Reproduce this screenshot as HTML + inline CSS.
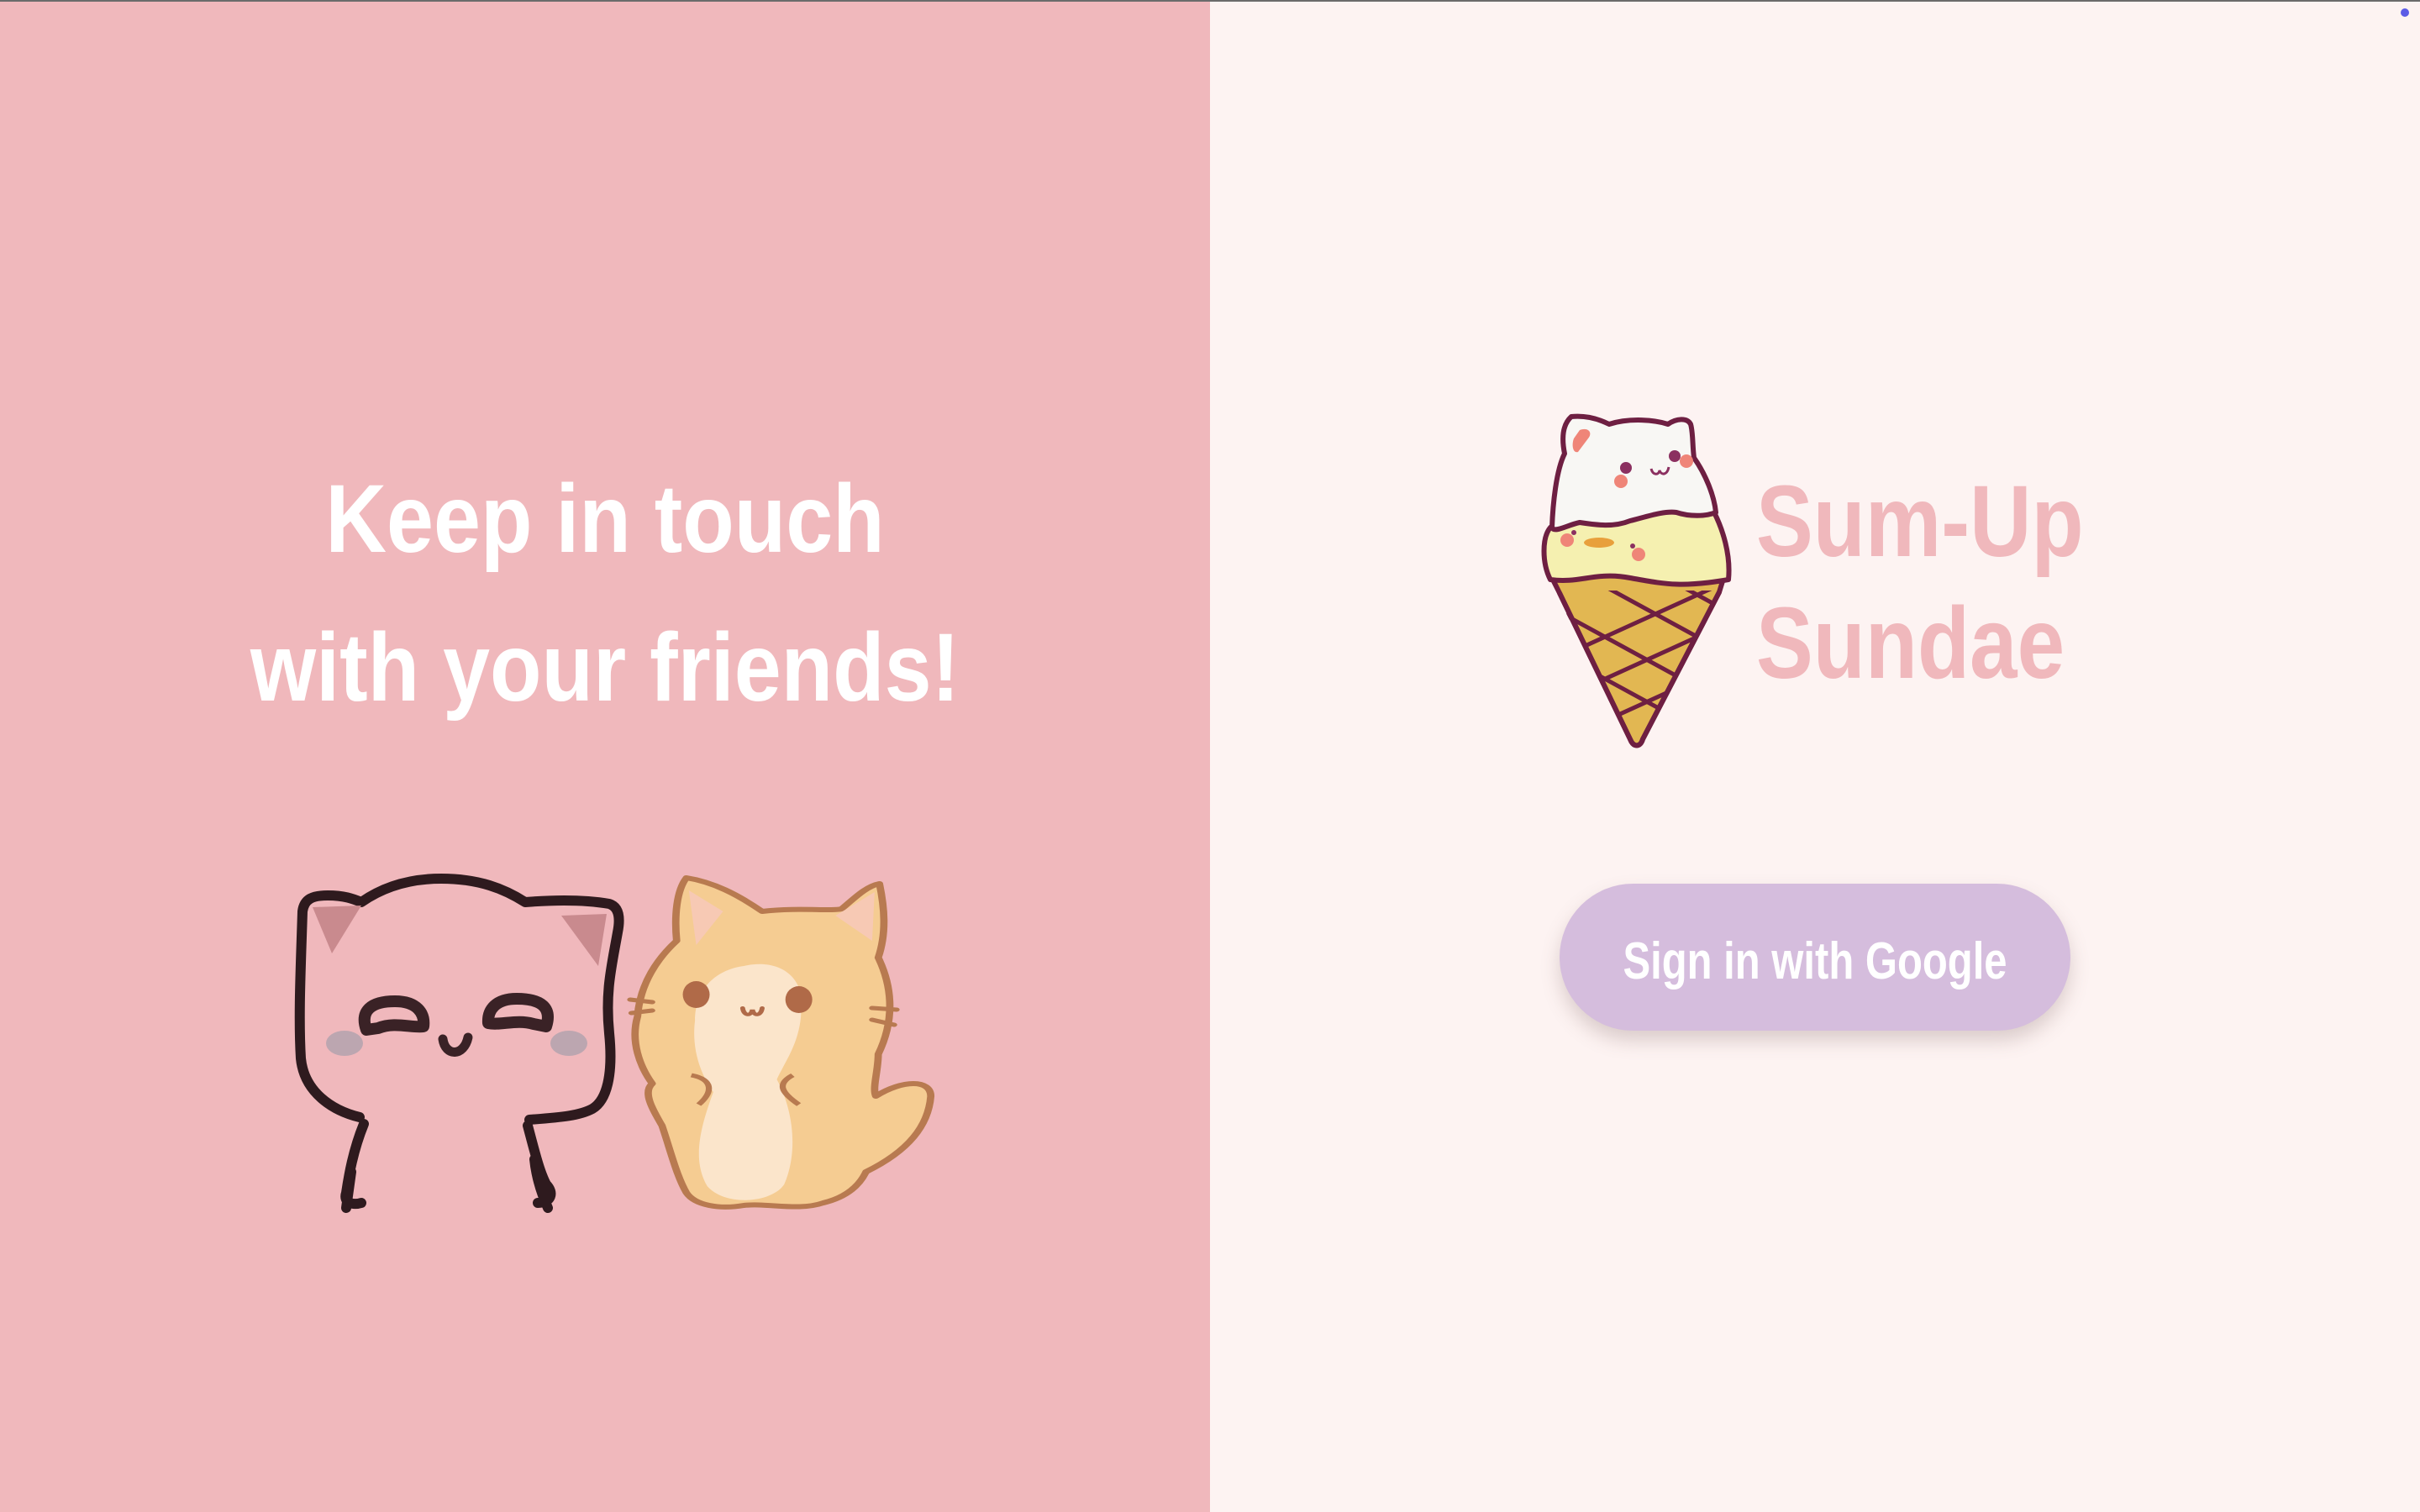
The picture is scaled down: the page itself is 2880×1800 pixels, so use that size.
<!DOCTYPE html>
<html><head><meta charset="utf-8">
<style>
html,body{margin:0;padding:0;width:2880px;height:1800px;overflow:hidden;background:#fdf3f2;}
body{position:relative;font-family:"Liberation Sans",sans-serif;}
.left{position:absolute;left:0;top:0;width:1440px;height:1800px;background:#f0b8bc;}
.topline{position:absolute;left:0;top:0;width:2880px;height:2px;background:#6b6b6b;}
.t{position:absolute;font-weight:bold;white-space:nowrap;line-height:1;}
.title{color:#fff;font-size:115px;left:720px;transform:translateX(-50%) scaleX(0.875);}
.brand{color:#f0b8bc;font-size:121px;left:2090px;transform-origin:0 0;transform:scaleX(0.84);}
.btn{position:absolute;left:1856px;top:1052px;width:608px;height:175px;border-radius:88px;background:#d5bddd;box-shadow:0 12px 22px rgba(120,90,90,0.25);}
.btntext{color:#fff;font-size:62px;left:2160px;top:1114px;transform:translateX(-50%) scaleX(0.79);}
.dot{position:absolute;left:2857px;top:10px;width:10px;height:10px;border-radius:50%;background:#5b5be6;}
</style></head>
<body>
<div class="left"></div>
<div class="topline"></div>
<div class="dot"></div>

<div class="t title" style="top:561px;">Keep in touch</div>
<div class="t title" style="top:738px;">with your friends!</div>

<div class="t brand" style="top:560px;">Sum-Up</div>
<div class="t brand" style="top:705px;">Sundae</div>

<div class="btn"></div>
<div class="t btntext">Sign in with Google</div>

<svg width="2880" height="1800" style="position:absolute;left:0;top:0" xmlns="http://www.w3.org/2000/svg">
  <defs>
    <clipPath id="cone"><path d="M1850,703 L2046,703 L1955,880 C1952,890 1944,890 1940,880 Z"/></clipPath>
  </defs>
  <!-- White cat -->
  <g fill="none" stroke="#2e1a1e" stroke-width="12" stroke-linecap="round" stroke-linejoin="round">
    <path d="M428,1330 C395,1322 362,1300 358,1260 C355,1210 358,1150 360,1085 C362,1070 372,1066 390,1066 C410,1066 420,1070 430,1074 C450,1060 480,1046 525,1046 C570,1046 600,1058 625,1074 C650,1072 690,1070 725,1076 C738,1080 738,1095 735,1110 C728,1150 720,1180 725,1230 C730,1280 722,1310 705,1320 C690,1328 670,1330 630,1333"/>
    <path d="M433,1338 C420,1370 415,1400 412,1420 C408,1432 420,1435 430,1432 M412,1438 L418,1395"/>
    <path d="M628,1340 C636,1370 642,1395 650,1410 C660,1420 656,1432 640,1432 M652,1438 C644,1420 638,1400 636,1380"/>
  </g>
  <path d="M372,1080 L430,1078 L395,1135 Z" fill="#c98a8e"/>
  <path d="M722,1088 L668,1090 L712,1150 Z" fill="#c98a8e"/>
  <g fill="none" stroke="#3a2226" stroke-width="14" stroke-linecap="round" stroke-linejoin="round">
    <path d="M436,1226 C428,1203 442,1192 470,1192 C496,1192 506,1206 504,1222 C490,1224 470,1216 450,1224 Z"/>
    <path d="M650,1222 C657,1200 645,1189 615,1189 C590,1189 580,1202 581,1218 C596,1221 615,1213 635,1219 Z"/>
    <path d="M527,1237 C530,1258 552,1258 557,1235" stroke-width="11"/>
  </g>
  <ellipse cx="410" cy="1242" rx="22" ry="15" fill="#bca6b0"/>
  <ellipse cx="677" cy="1242" rx="22" ry="15" fill="#bca6b0"/>

  <!-- Orange cat (stretched horizontally) -->
  <g transform="translate(340,0) scale(1.454,1) translate(-340,0)">
  <g stroke="#b87a50" stroke-width="6" stroke-linejoin="round" stroke-linecap="round">
    <path fill="#f5cc92" d="M823,1305 C845,1285 868,1285 868,1305 C866,1340 850,1370 815,1395 C810,1410 800,1425 780,1432 C760,1442 735,1432 715,1435 C695,1440 675,1435 668,1420 C660,1400 655,1370 648,1340 C640,1320 632,1300 640,1290 C630,1270 622,1240 628,1210 C630,1170 645,1140 660,1120 C658,1090 660,1060 668,1045 C690,1050 710,1065 730,1085 C760,1080 785,1085 795,1082 C805,1070 815,1055 826,1052 C830,1080 832,1110 825,1140 C835,1170 840,1210 825,1255 C825,1275 820,1295 823,1305 Z"/>
  </g>
  <path d="M790,1090 L822,1062 L820,1120 Z" fill="#f7c9b4"/>
  <path d="M670,1060 L698,1085 L676,1125 Z" fill="#f7c9b4"/>
  <path fill="#fbe5cb" d="M715,1150 C745,1140 765,1165 762,1200 C762,1240 748,1265 742,1285 C755,1320 760,1370 748,1410 C738,1432 700,1437 685,1412 C672,1380 680,1340 690,1300 C680,1280 672,1250 675,1215 C675,1180 690,1155 715,1150 Z"/>
  <path fill="none" stroke="#b87a50" stroke-width="5" d="M672,1280 C690,1285 690,1300 678,1315 M755,1280 C742,1290 745,1300 760,1315"/>
  <ellipse cx="676" cy="1184" rx="11" ry="16" fill="#b06a48"/>
  <ellipse cx="760" cy="1190" rx="11" ry="16" fill="#b06a48"/>
  <path d="M714,1200 C715,1210 721,1210 722,1202 C723,1210 729,1210 730,1200" fill="none" stroke="#b06a48" stroke-width="4" stroke-linecap="round"/>
  <g stroke="#b87a50" stroke-width="5" stroke-linecap="round">
    <path d="M820,1200 L840,1202 M820,1214 L838,1220 M622,1190 L640,1193 M623,1206 L640,1203"/>
  </g>
  </g>

  <!-- Ice cream -->
  <g stroke="#6e1f42" stroke-width="6" stroke-linejoin="round" stroke-linecap="round">
    <path fill="#e2b752" d="M1848,690 C1900,680 1990,680 2050,692 L2046,705 L1955,880 C1952,890 1944,890 1940,880 L1856,706 Z"/>
  </g>
  <g clip-path="url(#cone)" stroke="#6e1f42" stroke-width="5" fill="none">
    <path d="M1840,720 L2060,840 M1840,770 L2060,890 M1840,660 L2060,780 M1840,610 L2060,730"/>
    <path d="M2060,690 L1840,790 M2060,740 L1840,840 M2060,790 L1840,890 M2060,840 L1840,940"/>
  </g>
  <g stroke="#6e1f42" stroke-width="6" stroke-linejoin="round" stroke-linecap="round">
    <path fill="none" d="M1856,706 L1940,880 C1944,890 1952,890 1955,880 L2046,705"/>
    <path fill="#f5f0b0" d="M1845,628 C1835,640 1835,670 1845,690 C1880,695 1900,680 1940,688 C1980,695 2000,700 2057,690 C2060,660 2050,630 2040,610 C2000,605 1960,610 1850,625 Z"/>
    <path fill="#f8f7f4" d="M1847,628 C1848,600 1852,560 1862,540 C1858,520 1860,505 1870,496 C1890,494 1905,500 1915,505 C1940,497 1970,500 1985,505 C1995,498 2008,497 2012,505 C2015,515 2014,530 2016,545 C2030,565 2040,590 2042,610 C2030,615 2010,615 1995,610 C1980,608 1960,615 1940,620 C1920,628 1900,625 1880,622 C1865,625 1850,635 1847,628 Z"/>
  </g>
  <path d="M1880,512 C1890,508 1896,515 1890,522 L1878,538 C1872,540 1870,530 1873,522 Z" fill="#ef8578"/>
  <circle cx="1935" cy="557" r="7" fill="#8b3060"/>
  <circle cx="1993" cy="543" r="7" fill="#8b3060"/>
  <circle cx="1929" cy="573" r="8" fill="#ef8578"/>
  <circle cx="2007" cy="549" r="8" fill="#ef8578"/>
  <path d="M1965,558 C1967,566 1974,566 1975,560 C1977,566 1984,566 1986,556" fill="none" stroke="#8b3060" stroke-width="3"/>
  <circle cx="1865" cy="643" r="8" fill="#ef8578"/>
  <circle cx="1950" cy="660" r="8" fill="#ef8578"/>
  <ellipse cx="1903" cy="646" rx="18" ry="6" fill="#e8a03c"/>
  <circle cx="1873" cy="634" r="3" fill="#8b3060"/>
  <circle cx="1943" cy="650" r="3" fill="#8b3060"/>
</svg>
</body></html>
